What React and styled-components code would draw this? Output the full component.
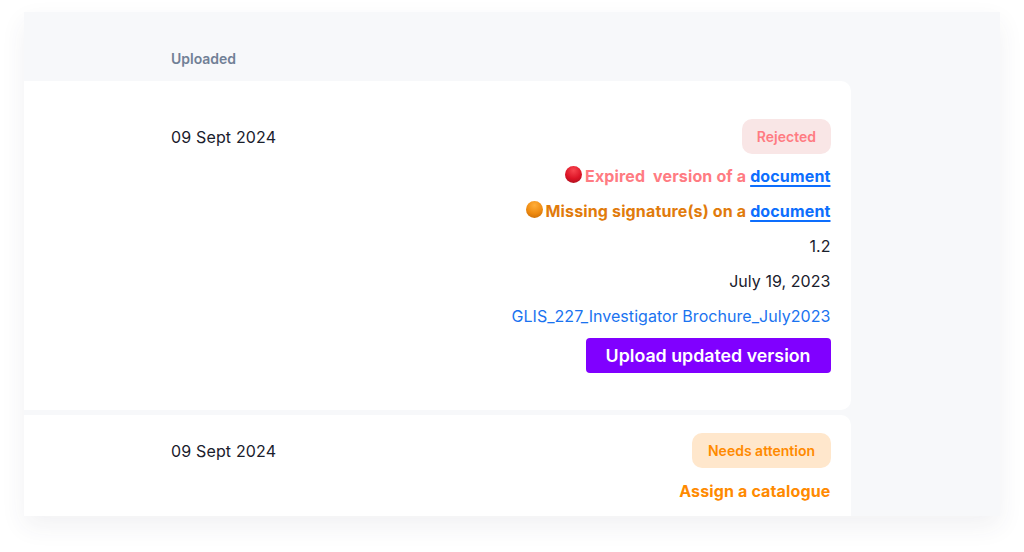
import React from "react";
import styled, { createGlobalStyle } from "styled-components";

const GlobalStyle = createGlobalStyle`
  html, body {
    margin: 0;
    height: 100%;
    background: #fff;
    font-family: Inter, "Liberation Sans", sans-serif;
  }
`;

const Page = styled.div`
  padding: 12px 24px;
  opacity: 0.999;
`;

const Panel = styled.div`
  height: 504px;
  background: #f7f8fa;
  overflow: hidden;
  box-shadow: 0 10px 24px rgba(60, 50, 90, 0.07);
`;

const HeaderRow = styled.div`
  height: 69px;
  padding: 38px 0 0 147px;
  box-sizing: border-box;
  font-size: 14px;
  line-height: 18px;
  font-weight: 600;
  letter-spacing: -0.02px;
  color: #718096;
`;

const Card = styled.div`
  width: 826.5px;
  box-sizing: border-box;
  display: flex;
  justify-content: space-between;
  align-items: flex-start;
  background: #fff;
  border-radius: 0 10px 10px 0;
  padding: ${(p) => p.$top}px 20px 0 147px;
  height: ${(p) => p.$height}px;
  margin-bottom: 5px;
`;

const DateText = styled.div`
  font-size: 16px;
  line-height: 35px;
  margin-top: 1px;
  letter-spacing: 0.16px;
  color: #1a202c;
`;

const Details = styled.div`
  display: flex;
  flex-direction: column;
  align-items: flex-end;
`;

const Badge = styled.div`
  height: 35px;
  box-sizing: border-box;
  padding: 0 ${(p) => p.$pad}px;
  display: flex;
  align-items: center;
  border-radius: 10px;
  font-size: 14px;
  font-weight: 600;
  margin-bottom: ${(p) => p.$gap}px;
  color: ${(p) => p.$color};
  background: ${(p) => p.$bg};
`;

const Row = styled.div`
  height: 35px;
  display: flex;
  align-items: center;
  font-size: 16px;
  color: ${(p) => p.$color || "#1a202c"};
  font-weight: ${(p) => (p.$bold ? 700 : 400)};
  letter-spacing: ${(p) => (p.$bold ? "0.14px" : "0.05px")};
  white-space: pre;
`;

const Dot = styled.span`
  width: 17px;
  height: 17px;
  border-radius: 50%;
  margin-right: 3px;
  margin-top: -2px;
  background: radial-gradient(
    circle at 50% 25%,
    ${(p) => p.$light} 0%,
    ${(p) => p.$mid} 55%,
    ${(p) => p.$dark} 100%
  );
`;

const DocLink = styled.a`
  color: #0d6efd;
  text-decoration: underline;
  text-decoration-thickness: 1.5px;
  text-underline-offset: 3px;
`;

const FileLink = styled.a`
  color: #1a73f0;
`;

const UploadButton = styled.button`
  height: 35px;
  margin-top: 5px;
  padding: 0 20px;
  border: 0;
  border-radius: 4px;
  background: #8000ff;
  color: #fff;
  font-family: inherit;
  font-size: 17.8px;
  font-weight: 600;
`;

export default function App() {
  return (
    <>
      <GlobalStyle />
      <Page>
        <Panel>
          <HeaderRow>Uploaded</HeaderRow>
          <Card $top={38} $height={329}>
            <DateText>09 Sept 2024</DateText>
            <Details>
              <Badge $color="#ff7b82" $bg="#f9e6e6" $pad={14.5} $gap={4}>Rejected</Badge>
              <Row $color="#ff7b82" $bold>
                <Dot $light="#f8454f" $mid="#dc1426" $dark="#9c0f1c" />
                {"Expired  version of a "}
                <DocLink>document</DocLink>
              </Row>
              <Row $color="#e17b0b" $bold>
                <Dot $light="#ffae3a" $mid="#ee8a10" $dark="#c06404" />
                {"Missing signature(s) on a "}
                <DocLink>document</DocLink>
              </Row>
              <Row>1.2</Row>
              <Row>July 19, 2023</Row>
              <Row>
                <FileLink>GLIS_227_Investigator Brochure_July2023</FileLink>
              </Row>
              <UploadButton>Upload updated version</UploadButton>
            </Details>
          </Card>
          <Card $top={18} $height={120}>
            <DateText>09 Sept 2024</DateText>
            <Details>
              <Badge $color="#ff8a00" $bg="#ffe7cc" $pad={15.5} $gap={5}>Needs attention</Badge>
              <Row $color="#ff8a00" $bold>Assign a catalogue</Row>
            </Details>
          </Card>
        </Panel>
      </Page>
    </>
  );
}
